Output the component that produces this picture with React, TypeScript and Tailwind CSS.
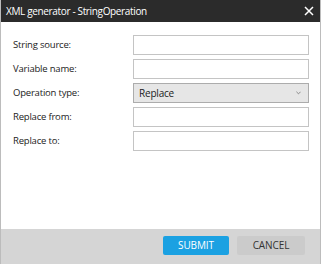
import { useState } from 'react'

const FIELDS = [
  { id: 'source', label: 'String source:' },
  { id: 'variable', label: 'Variable name:' },
  { id: 'operation', label: 'Operation type:', select: true },
  { id: 'from', label: 'Replace from:' },
  { id: 'to', label: 'Replace to:' },
]

export default function App() {
  const [values, setValues] = useState<Record<string, string>>({ operation: 'Replace' })

  return (
    <div
      className="w-[321px] h-[264px] flex flex-col bg-white border-x border-[#bcbcbc] text-[#222]"
      style={{ fontFamily: '"Open Sans", "Noto Sans", sans-serif' }}
    >
      <div className="h-[22px] bg-[#2b2b2b] flex items-center justify-between pl-[5px] pr-[6px] text-white">
        <span className="text-[10px] tracking-[-0.35px]">XML generator - StringOperation</span>
        <svg viewBox="0 0 10 10" width="10" height="10" stroke="white" strokeWidth="1.5" fill="none">
          <path d="M1 1l8 8M9 1l-8 8" />
        </svg>
      </div>

      <div className="flex-1 flex flex-col gap-[4px] pt-[13px] pl-[12px] pr-[11px]">
        {FIELDS.map((f) => (
          <div key={f.id} className="flex items-center h-[20px]">
            <label className="w-[120px] text-[9.5px] tracking-[-0.2px] text-[#222]">{f.label}</label>
            {f.select ? (
              <div className="w-[176px] h-[20px] flex items-center justify-between border border-[#acacac] bg-[#e6e6e6] pl-[5px] pr-[7px]">
                <span className="text-[10px] tracking-[-0.2px]">{values.operation}</span>
                <svg viewBox="0 0 6 4" width="5" height="4" stroke="#777" strokeWidth="1" fill="none">
                  <path d="M0.5 0.5L3 3l2.5-2.5" />
                </svg>
              </div>
            ) : (
              <input
                value={values[f.id] ?? ''}
                onChange={(e) => setValues((v) => ({ ...v, [f.id]: e.target.value }))}
                className="w-[176px] h-[20px] border border-[#c4c4c4] bg-white outline-none px-1 text-[9.5px]"
              />
            )}
          </div>
        ))}
      </div>

      <div className="h-[35px] bg-[#d5d5d5] flex justify-end items-start pt-[7px] pr-[15px] gap-[8px]">
        <button className="w-[66px] h-[19px] bg-[#1ba1e2] rounded-[2px] text-white text-[10px] tracking-[-0.1px]">
          SUBMIT
        </button>
        <button className="w-[68px] h-[19px] bg-[#cbcbcb] rounded-[2px] text-[#333] text-[10px] tracking-[-0.1px]">
          CANCEL
        </button>
      </div>
    </div>
  )
}
